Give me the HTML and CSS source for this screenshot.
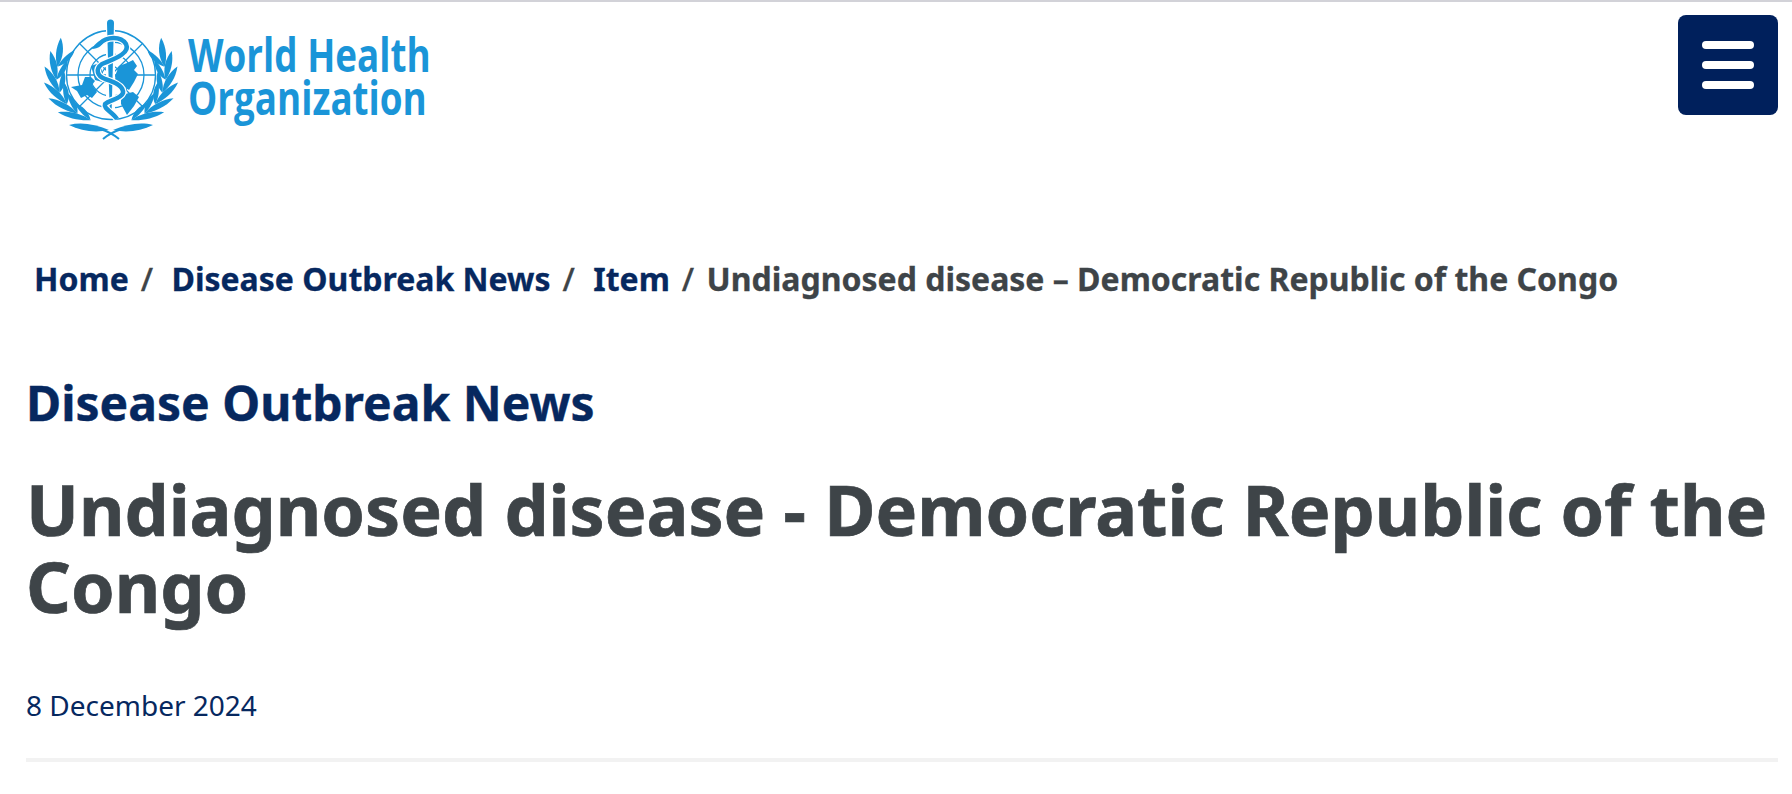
FILE: index.html
```html
<!DOCTYPE html>
<html lang="en">
<head>
    <meta charset="UTF-8">
    <meta name="viewport" content="width=device-width, initial-scale=1.0">
    <title>Undiagnosed disease - Democratic Republic of the Congo</title>
    <link rel="stylesheet" href="styles.css">
</head>
<body>
    <header class="site-header">
        <a class="logo" href="#">
            <svg class="logo-emblem" viewBox="40 10 150 130" width="150" height="130" aria-hidden="true">
                <defs>
                    <g id="leaves">
                        <path d="M60 92C53 85 47 74 46 61C54 68 60 79 60 92Z"/>
                        <path d="M60 92C59 83 61 75 65 66C68 75 66 85 60 92Z"/>
                    </g>
                    <g id="branch">
                        <g transform="translate(0 12) scale(1 .86)">
                            <use href="#leaves" transform="rotate(-50 112 75)"/>
                            <use href="#leaves" transform="rotate(-34 112 75)"/>
                            <use href="#leaves" transform="rotate(-18 112 75)"/>
                            <use href="#leaves" transform="rotate(-2 112 75)"/>
                            <use href="#leaves" transform="rotate(14 112 75)"/>
                            <use href="#leaves" transform="rotate(30 112 75)"/>
                        </g>
                        <path d="M70 125C82 122 96 124 110 130C96 133 82 131 70 125Z"/>
                    </g>
                </defs>
                <g class="globe">
                    <circle cx="112" cy="75" r="44.5"/>
                    <circle cx="112" cy="75" r="33"/>
                    <circle cx="112" cy="75" r="21"/>
                    <circle cx="112" cy="75" r="9"/>
                    <path d="M67 75H157M80 43L144 107M144 43L80 107"/>
                </g>
                <g class="land">
                    <path d="M72 87L83 85L86 77L92 77L96 81L93 85L98 92L93 98L88 95L82 98L78 91Z"/>
                    <path d="M116 76L120 66L128 63L134 60L138 66L135 70L139 74L135 82L130 90L124 86L117 82Z"/>
                    <path d="M122 95L134 92L140 97L135 106L128 115L122 104Z"/>
                    <path d="M92 66L103 62L103 82L96 80Z"/>
                </g>
                <use href="#branch" class="laurel"/>
                <use href="#branch" class="laurel" transform="matrix(-1 0 0 1 224 0)"/>
                <path class="stem" d="M101 129C108 131 114 134 120 139M123 129C116 131 110 134 104 139"/>
                <path class="staff-back" d="M107 30H116V116H107Z"/>
                <path class="staff" d="M108 23A3.5 3.5 0 0 1 115 23L114 60L112.500 116H111L109 60Z"/>
                <path class="snake-back" d="M100 44C108 36 122 36 127 44C132 54 112 60 103 64C96 69 98 76 106 79C116 82 125 86 124 93C122 99 110 100 106 104C104 109 114 112 118 119"/>
                <path class="snake" d="M100 44C108 36 122 36 127 44C132 54 112 60 103 64C96 69 98 76 106 79C116 82 125 86 124 93C122 99 110 100 106 104C104 109 114 112 118 119"/>
                <path class="snake-head" d="M93 49C96 43 101 40 106 40C104 45 99 49 93 49Z"/>
            </svg>
            <span class="logo-text">World Health<br>Organization</span>
        </a>
        <button class="menu-btn" aria-label="Menu">
            <span></span>
            <span></span>
            <span></span>
        </button>
    </header>

    <nav class="breadcrumb">
        <a href="#">Home</a><span class="sep">/</span>
        <a href="#">Disease Outbreak News</a><span class="sep">/</span>
        <a href="#">Item</a><span class="sep sep-last">/</span>
        <span class="current">Undiagnosed disease – Democratic Republic of the Congo</span>
    </nav>

    <main class="content">
        <h2 class="section-title">Disease Outbreak News</h2>
        <h1 class="page-title">Undiagnosed disease - Democratic Republic of the Congo</h1>
        <p class="date">8 December 2024</p>
        <hr class="divider">
    </main>
</body>
</html>
```

FILE: styles.css
```css
html, body {
    margin: 0;
    height: 794px;
    overflow: hidden;
    background: #fff;
}
body {
    font-family: "Noto Sans", sans-serif;
    border-top: 2px solid #d2d2d8;
    box-sizing: border-box;
    color: #3e4448;
}
a {
    color: #06285f;
    text-decoration: none;
}
.site-header {
    display: flex;
    justify-content: space-between;
    align-items: flex-start;
    padding: 13px 14px 0 40px;
    height: 255px;
    box-sizing: border-box;
}
.logo {
    display: flex;
    align-items: flex-start;
}
.logo-emblem {
    margin-top: -5px;
    margin-left: -1px;
    fill: #1a95d8;
}
.logo-text {
    font-family: "Open Sans", sans-serif;
    font-size: 46px;
    font-weight: 700;
    line-height: 43px;
    color: #1a95d8;
    margin-top: 18px;
    margin-left: -1px;
    transform: scaleX(.8);
    transform-origin: left top;
    white-space: nowrap;
}
.globe {
    fill: none;
    stroke: #1a95d8;
    stroke-width: 1.3;
}
.laurel {
    fill: #1a95d8;
    stroke: none;
}
.stem {
    fill: none;
    stroke: #1a95d8;
    stroke-width: 2;
}
.snake-back {
    fill: none;
    stroke: #fff;
    stroke-width: 7;
}
.snake {
    fill: none;
    stroke: #1a95d8;
    stroke-width: 4.5;
}
.snake-head {
    fill: #1a95d8;
}
.staff-back {
    fill: #fff;
}
.staff {
    fill: #1a95d8;
}
.menu-btn {
    width: 100px;
    height: 100px;
    background: #00205c;
    border: none;
    border-radius: 8px;
    display: flex;
    flex-direction: column;
    justify-content: center;
    align-items: center;
    gap: 12px;
    padding: 0;
}
.menu-btn span {
    width: 52px;
    height: 8px;
    border-radius: 4px;
    background: #fff;
}
.breadcrumb {
    padding-left: 34px;
    font-size: 32px;
    line-height: 44px;
    font-weight: 700;
    white-space: nowrap;
    height: 64px;
    -webkit-text-stroke: .3px;
}
.breadcrumb .sep {
    margin: 0 10px 0 12px;
    font-weight: 500;
}
.breadcrumb .sep-last {
    margin-right: 4px;
}
.content {
    padding: 0 14px 0 26px;
}
.section-title {
    margin: 0;
    padding-top: 52px;
    font-size: 48px;
    line-height: 60px;
    font-weight: 700;
    color: #06285f;
    -webkit-text-stroke: .4px;
}
.page-title {
    margin: 38px 0 0;
    font-size: 70px;
    line-height: 77px;
    font-weight: 700;
    -webkit-text-stroke: .7px;
}
.date {
    margin: 62px 0 0;
    font-size: 28px;
    line-height: 36px;
    color: #06285f;
}
.divider {
    margin: 35px 0 0;
    height: 4px;
    border: none;
    background: #f2f2f2;
}
```
